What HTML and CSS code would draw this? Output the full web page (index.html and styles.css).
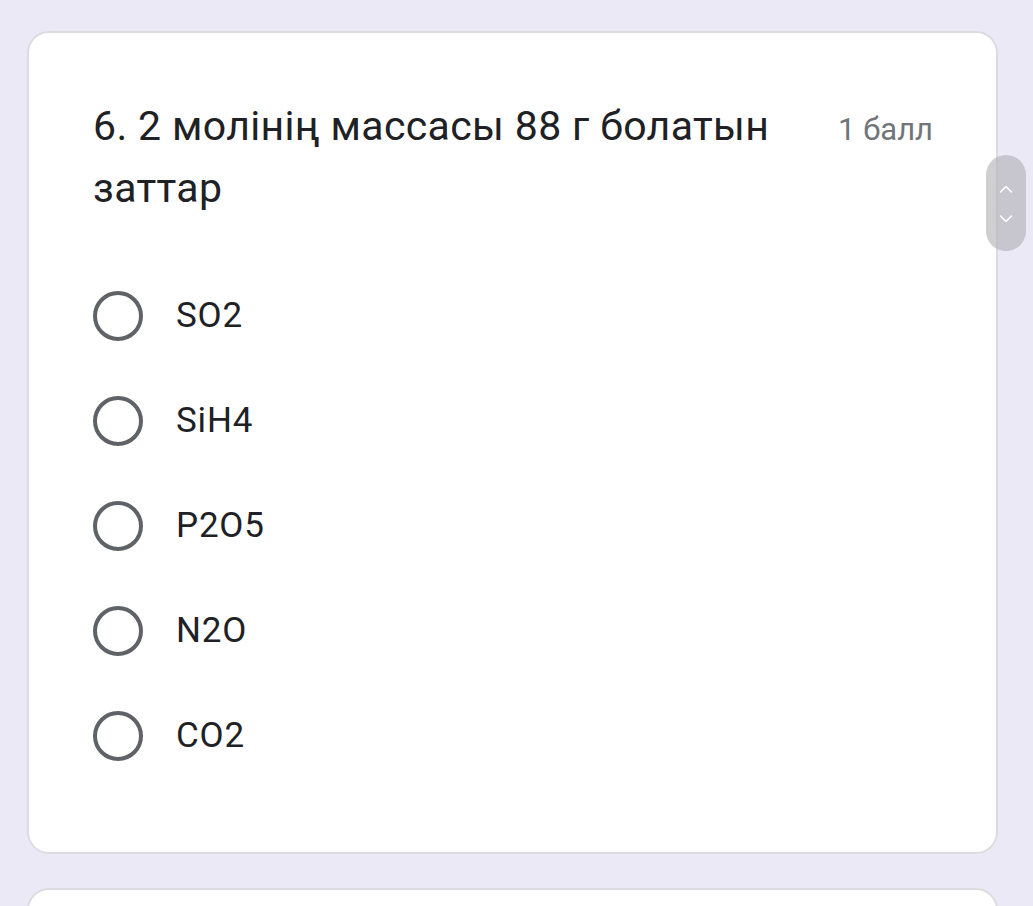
FILE: index.html
```html
<!DOCTYPE html>
<html lang="kk">
<head>
<meta charset="utf-8">
<title>Form</title>
<link rel="stylesheet" href="styles.css">
</head>
<body>
<main class="page">
  <section class="card">
    <div class="question-head">
      <h2 class="question-title">6. 2 молінің массасы 88 г болатын заттар</h2>
      <span class="points">1 балл</span>
    </div>
    <ul class="options">
      <li class="option"><span class="radio"></span><span class="label">SO2</span></li>
      <li class="option"><span class="radio"></span><span class="label">SiH4</span></li>
      <li class="option"><span class="radio"></span><span class="label">P2O5</span></li>
      <li class="option"><span class="radio"></span><span class="label">N2O</span></li>
      <li class="option"><span class="radio"></span><span class="label">CO2</span></li>
    </ul>
  </section>
  <section class="card card-next"></section>
</main>
<div class="scroll-thumb">
  <svg width="40" height="96" viewBox="0 0 40 96" aria-hidden="true">
    <path d="M14.5 37 L20 31.5 L25.5 37" fill="none" stroke="#ffffff" stroke-width="1.6" stroke-linecap="round" stroke-linejoin="round"/>
    <path d="M14.5 61 L20 66.5 L25.5 61" fill="none" stroke="#ffffff" stroke-width="1.6" stroke-linecap="round" stroke-linejoin="round"/>
  </svg>
</div>
</body>
</html>
```
FILE: styles.css
```css
* { box-sizing: border-box; }
html, body {
  margin: 0;
  padding: 0;
  height: 100%;
  overflow: hidden;
}
body {
  background: #ece9f6;
  font-family: Roboto, "Noto Sans", "DejaVu Sans", sans-serif;
  color: #202124;
}
.page {
  padding: 31px 35px 0 27px;
  display: flex;
  flex-direction: column;
  gap: 34px;
}
.card {
  width: 971px;
  background: #ffffff;
  border: 2px solid #dcdce0;
  border-radius: 22px;
  padding: 62px 63px 64px 64px;
}
.card-next {
  height: 200px;
}
.question-head {
  display: flex;
  justify-content: space-between;
  align-items: baseline;
  gap: 40px;
}
.question-title {
  margin: 0;
  font-weight: 400;
  font-size: 41px;
  line-height: 62px;
  letter-spacing: 0.35px;
  max-width: 710px;
}
.points {
  font-size: 31px;
  line-height: 62px;
  color: #70757a;
  white-space: nowrap;
}
.options {
  list-style: none;
  margin: 44px 0 0 0;
  padding: 0;
  display: flex;
  flex-direction: column;
}
.option {
  height: 105px;
  display: flex;
  align-items: center;
  gap: 33px;
}
.radio {
  width: 50px;
  height: 50px;
  border: 4px solid #5f6368;
  border-radius: 50%;
  flex: none;
}
.label {
  font-size: 35px;
  line-height: 40px;
  letter-spacing: 0.8px;
}
.scroll-thumb {
  position: fixed;
  top: 155px;
  right: 7px;
  width: 40px;
  height: 96px;
  border-radius: 20px;
  background: rgba(175, 175, 180, 0.6);
}
.scroll-thumb svg { display: block; }
```
